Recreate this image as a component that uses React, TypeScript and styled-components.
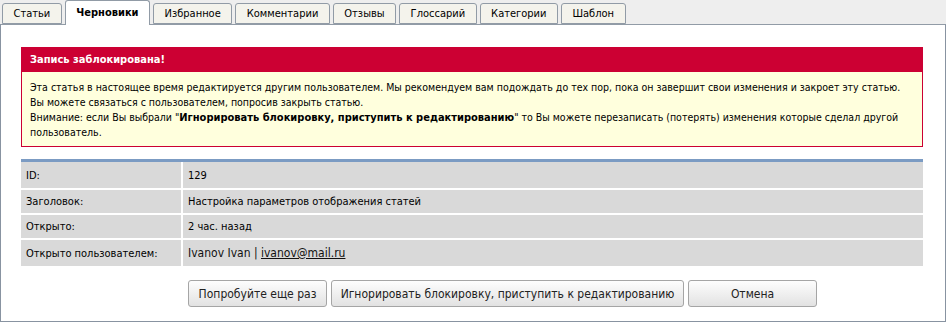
import { Fragment } from "react";
import styled, { createGlobalStyle } from "styled-components";

const Global = createGlobalStyle`
    html, body {
        margin: 0;
        padding: 0;
        background: #eeeeee;
    }
    body {
        font-family: Tahoma, "DejaVu Sans Condensed", "DejaVu Sans", sans-serif;
        font-size: 11px;
        color: #000;
    }
`;

const Page = styled.div`
    width: 946px;
    height: 322px;
    display: flex;
    flex-direction: column;
`;

const TabBar = styled.div`
    display: flex;
    align-items: flex-end;
    gap: 3px;
    height: 24px;
    padding-left: 2px;
    position: relative;
    z-index: 1;
`;

const Tab = styled.div<{ $active?: boolean }>`
    box-sizing: border-box;
    height: ${(p) => (p.$active ? "25px" : "21px")};
    padding: 0 10.5px;
    display: flex;
    align-items: center;
    justify-content: center;
    background: ${(p) => (p.$active ? "#ffffff" : "#f4f3ec")};
    border: 1px solid #919ba6;
    border-bottom: ${(p) => (p.$active ? "none" : "1px solid #919ba6")};
    border-radius: 3px 3px 0 0;
    font-size: 11px;
    font-weight: ${(p) => (p.$active ? "bold" : "normal")};
    padding-bottom: ${(p) => (p.$active ? "1px" : "0")};
    margin-bottom: ${(p) => (p.$active ? "-1px" : "0")};
`;

const Panel = styled.div`
    flex: 1;
    background: #ffffff;
    border: 1px solid #8893a1;
    border-top-color: #919ba6;
    padding: 22px 22px 0 20px;
    display: flex;
    flex-direction: column;
`;

const Alert = styled.div`
    border: 1px solid #cc0033;
    background: #ffffdd;
`;

const AlertHead = styled.div`
    background: #cc0033;
    color: #ffffff;
    font-weight: bold;
    font-size: 11px;
    height: 24px;
    line-height: 24px;
    padding-left: 8px;
`;

const AlertBody = styled.div`
    padding: 8px 2px 6px 8px;
    line-height: 15px;
    font-size: 10.5px;
`;

const Strong = styled.b`
    font-size: 11px;
    line-height: 13px;
`;

const Table = styled.div`
    margin-top: 12px;
    border-top: 3px solid #7b9bc3;
    display: grid;
    grid-template-columns: 160px 1fr;
    grid-template-rows: 26px 23px 23px 26px;
    gap: 2px;
`;

const Cell = styled.div<{ $big?: boolean }>`
    background: #d9d9d9;
    display: flex;
    align-items: center;
    padding-left: 5px;
    font-size: ${(p) => (p.$big ? "12px" : "11px")};
    color: ${(p) => (p.$big ? "#111" : "#000")};
`;

const Link = styled.a`
    color: #111;
    text-decoration: underline;
`;

const Buttons = styled.div`
    display: flex;
    gap: 4px;
    margin-top: 14px;
    padding-left: 167px;
`;

const Button = styled.button<{ $w: number }>`
    width: ${(p) => p.$w}px;
    height: 27px;
    border: 1px solid #a5a5a5;
    border-radius: 3px;
    background: linear-gradient(#fdfdfd, #e2e2e2);
    font-family: Tahoma, "DejaVu Sans Condensed", "DejaVu Sans", sans-serif;
    font-size: 12px;
    color: #222;
    padding: 0;
`;

const TABS = ["Статьи", "Черновики", "Избранное", "Комментарии", "Отзывы", "Глоссарий", "Категории", "Шаблон"];

const ROWS: [string, string][] = [
    ["ID:", "129"],
    ["Заголовок:", "Настройка параметров отображения статей"],
    ["Открыто:", "2 час. назад"],
];

export default function App() {
    return (
        <Page>
            <Global />
            <TabBar>
                {TABS.map((t) => (
                    <Tab key={t} $active={t === "Черновики"}>
                        {t}
                    </Tab>
                ))}
            </TabBar>
            <Panel>
                <Alert>
                    <AlertHead>Запись заблокирована!</AlertHead>
                    <AlertBody>
                        Эта статья в настоящее время редактируется другим пользователем. Мы рекомендуем вам подождать до тех пор, пока он завершит свои изменения и закроет эту статью.
                        <br />
                        Вы можете связаться с пользователем, попросив закрыть статью.
                        <br />
                        Внимание: если Вы выбрали "<Strong>Игнорировать блокировку, приступить к редактированию</Strong>" то Вы можете перезаписать (потерять) изменения которые сделал другой пользователь.
                    </AlertBody>
                </Alert>
                <Table>
                    {ROWS.map(([k, v]) => (
                        <Fragment key={k}>
                            <Cell>{k}</Cell>
                            <Cell>{v}</Cell>
                        </Fragment>
                    ))}
                    <Cell>Открыто пользователем:</Cell>
                    <Cell $big>
                        Ivanov Ivan |&nbsp;<Link href="#">ivanov@mail.ru</Link>
                    </Cell>
                </Table>
                <Buttons>
                    <Button $w={139}>Попробуйте еще раз</Button>
                    <Button $w={353}>Игнорировать блокировку, приступить к редактированию</Button>
                    <Button $w={129}>Отмена</Button>
                </Buttons>
            </Panel>
        </Page>
    );
}
